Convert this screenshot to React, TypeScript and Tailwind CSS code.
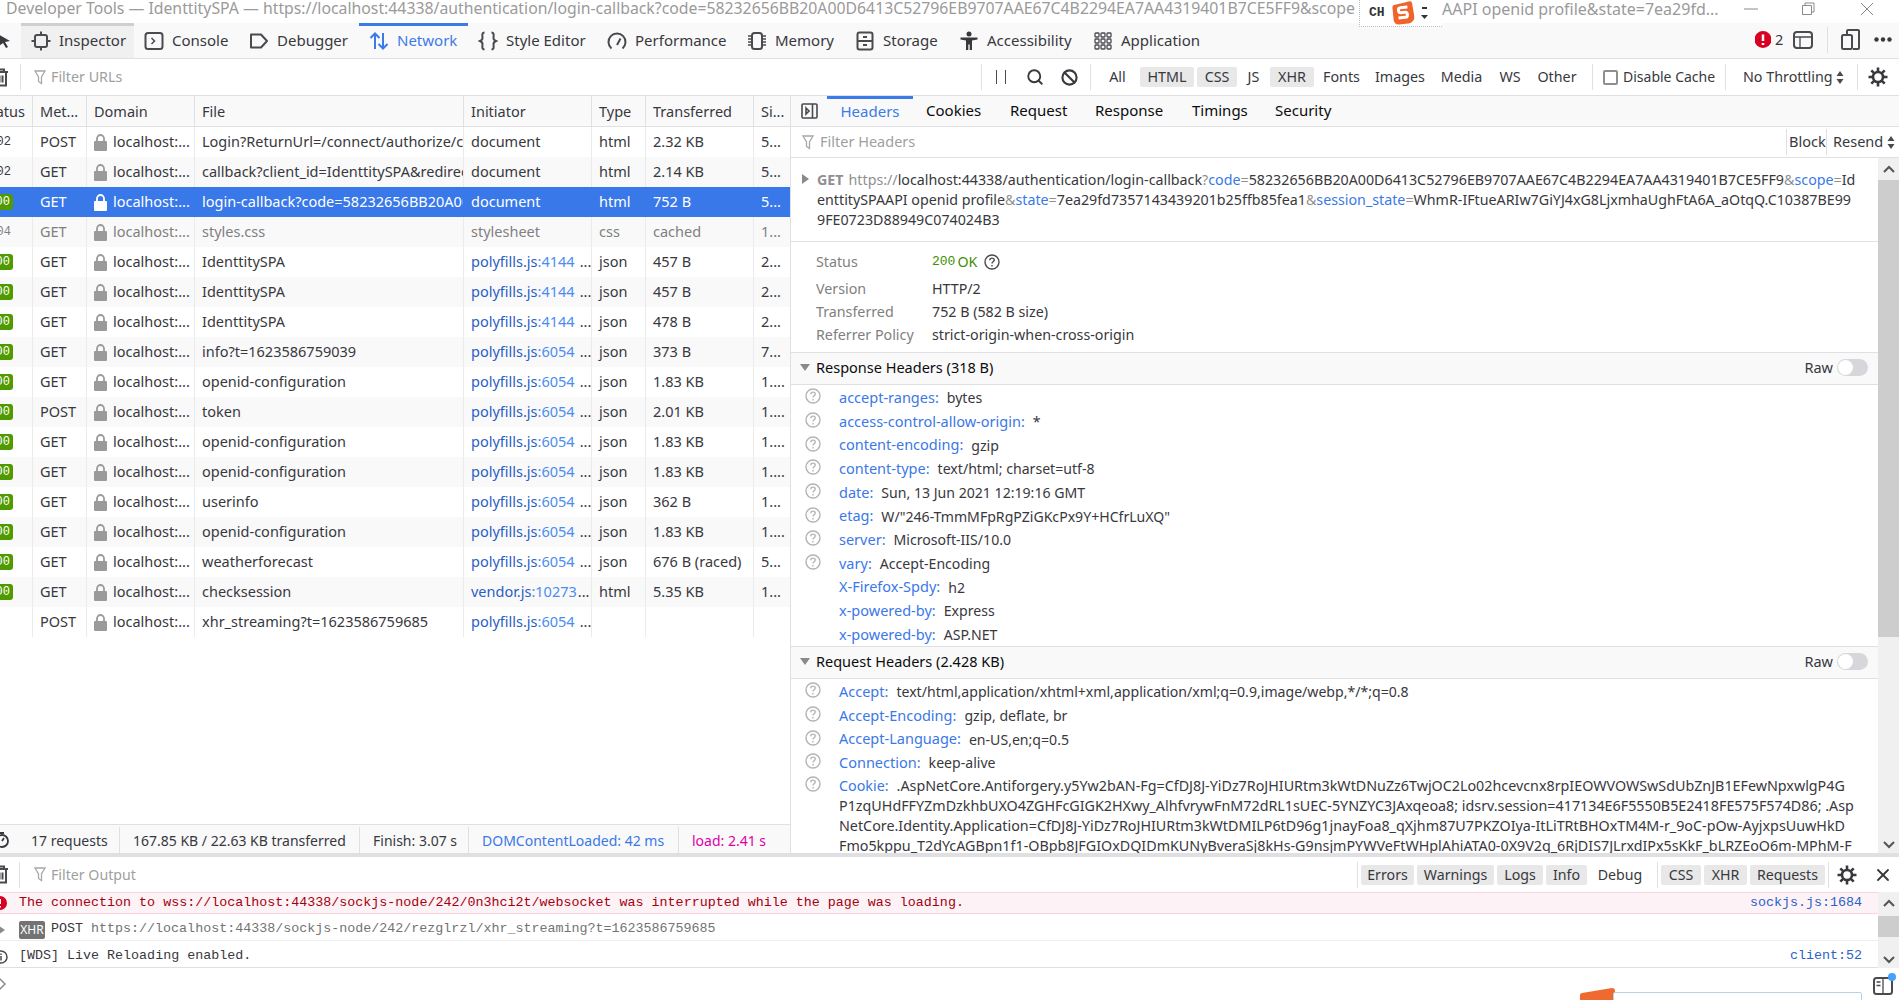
import React from "react";
import { Search, Ban, X } from "lucide-react";

const sans = "font-['Noto_Sans','Open_Sans',sans-serif]";
const mono = "font-['Liberation_Mono',monospace]";

function Sep({ className = "" }: { className?: string }) {
  return <div className={`w-px h-[26px] bg-[#e0e0e2] shrink-0 ${className}`} />;
}

function Svg({ size = 20, children, className = "" }: { size?: number; children: React.ReactNode; className?: string }) {
  return (
    <svg width={size} height={size} viewBox="0 0 20 20" fill="none" stroke="currentColor" strokeWidth="2" className={`shrink-0 ${className}`}>
      {children}
    </svg>
  );
}

function Funnel() {
  return (
    <svg width="12" height="15" viewBox="0 0 12 15" fill="none" stroke="#a8a8a8" strokeWidth="1.3" className="shrink-0">
      <path d="M1 1h10L7.5 7v6.5l-3-2V7z" />
    </svg>
  );
}

function Trash() {
  return (
    <svg width="16" height="19" viewBox="0 0 16 19" fill="none" stroke="#4a4a4f" strokeWidth="2" className="shrink-0">
      <path d="M1 4h14M5 4V1.500h6V4M3 4v13.500h10V4M6.500 7.500v7M9.500 7.500v7" />
    </svg>
  );
}

function Gear() {
  return (
    <svg width="22" height="22" viewBox="0 0 22 22" fill="none" stroke="#38383d" className="shrink-0">
      <circle cx="11" cy="11" r="5" strokeWidth="2.6" />
      <path d="M11 1.500v4M11 16.500v4M1.500 11h4M16.500 11h4M4.300 4.300l2.800 2.800M14.900 14.900l2.800 2.800M17.700 4.300l-2.800 2.800M7.100 14.900l-2.800 2.800" strokeWidth="2.6" />
    </svg>
  );
}

function Help({ dark = false }: { dark?: boolean }) {
  return (
    <svg width="16" height="16" viewBox="0 0 16 16" fill="none" stroke={dark ? "#4a4a4f" : "#b4b4b4"} strokeWidth="1.400" className="shrink-0">
      <circle cx="8" cy="8" r="7" />
      <path d="M5.800 6.200c0-1.300 1-2.100 2.200-2.100s2.200.8 2.200 2c0 1.700-2.200 1.600-2.200 3.400" />
      <path d="M8 11v1.500" />
    </svg>
  );
}

function Lock({ white = false }: { white?: boolean }) {
  return (
    <svg width="13" height="17" viewBox="0 0 13 17" className="shrink-0">
      <path d="M1 7h11a1 1 0 0 1 1 1v8a1 1 0 0 1-1 1H1a1 1 0 0 1-1-1V8a1 1 0 0 1 1-1z" fill={white ? "#fff" : "#9a9a9a"} />
      <path d="M3 8V4.500a3.500 3.500 0 0 1 7 0V8" fill="none" stroke={white ? "#fff" : "#9a9a9a"} strokeWidth="1.800" />
    </svg>
  );
}

function Triangle({ open = true }: { open?: boolean }) {
  return open ? (
    <svg width="10" height="7" viewBox="0 0 10 7" className="shrink-0"><path d="M0 0h10L5 7z" fill="#8a8a8a" /></svg>
  ) : (
    <svg width="7" height="10" viewBox="0 0 7 10" className="shrink-0"><path d="M0 0v10l7-5z" fill="#8a8a8a" /></svg>
  );
}

function UpDown() {
  return (
    <svg width="8" height="13" viewBox="0 0 8 13" fill="#4a4a4f" className="shrink-0">
      <path d="M4 0l3.500 5h-7zM4 13L.5 8h7z" />
    </svg>
  );
}

function Toggle() {
  return (
    <div className="w-[31px] h-[17px] rounded-full bg-[#d7d7db] flex items-center pl-px">
      <div className="w-[15px] h-[15px] rounded-full bg-white" />
    </div>
  );
}

const tabs: { label: string; width: string; icon: React.ReactNode; active?: boolean; selected?: boolean }[] = [
  {
    label: "Inspector",
    width: "w-[113px]",
    selected: true,
    icon: (
      <Svg>
        <rect x="4" y="4" width="12" height="12" rx="2" />
        <path d="M10 0.500v3.500M10 16v3.500M.5 10H4M16 10h3.500" />
      </Svg>
    ),
  },
  {
    label: "Console",
    width: "w-[105px]",
    icon: (
      <Svg>
        <rect x="1.500" y="2" width="17" height="16" rx="2.500" />
        <path d="M7.500 7l3 3-3 3" strokeWidth="1.500" />
      </Svg>
    ),
  },
  {
    label: "Debugger",
    width: "w-[120px]",
    icon: (
      <Svg>
        <path d="M2 3.500h10l6 6.500-6 6.500H2z" strokeLinejoin="round" />
      </Svg>
    ),
  },
  {
    label: "Network",
    width: "w-[109px]",
    active: true,
    icon: (
      <Svg>
        <path d="M6 18V2.500M1.500 7L6 2.500 10.500 7M14 2v15.500M9.500 13l4.500 4.500 4.500-4.500" />
      </Svg>
    ),
  },
  {
    label: "Style Editor",
    width: "w-[129px]",
    icon: (
      <Svg>
        <path d="M6.500 1.500C3.500 1.500 4.500 5 4.500 7c0 2-2.500 3-2.500 3s2.500 1 2.500 3c0 2-1 5.500 2 5.500M13.500 1.500c3 0 2 3.500 2 5.500 0 2 2.500 3 2.500 3s-2.500 1-2.500 3c0 2 1 5.500-2 5.500" />
      </Svg>
    ),
  },
  {
    label: "Performance",
    width: "w-[140px]",
    icon: (
      <Svg>
        <path d="M4.500 17.500a8.500 8.500 0 1 1 11 0" />
        <path d="M13.500 7.500L10 14" />
      </Svg>
    ),
  },
  {
    label: "Memory",
    width: "w-[108px]",
    icon: (
      <Svg>
        <rect x="5" y="2" width="10" height="16" rx="2.500" />
        <path d="M1 5h3M1 8h3M1 11h3M1 14h3M16 5h3M16 8h3M16 11h3M16 14h3" strokeWidth="1.300" />
      </Svg>
    ),
  },
  {
    label: "Storage",
    width: "w-[104px]",
    icon: (
      <Svg>
        <rect x="2.500" y="1.500" width="15" height="17" rx="2" />
        <path d="M2.500 10h15M8 6h4M8 14h4" />
      </Svg>
    ),
  },
  {
    label: "Accessibility",
    width: "w-[134px]",
    icon: (
      <svg width="20" height="20" viewBox="0 0 20 20" fill="#38383d" className="shrink-0">
        <circle cx="10" cy="3" r="2.500" />
        <path d="M1.500 6.500h17v2l-5.500 1V19h-2.300v-5.500H9.300V19H7V9.500l-5.500-1z" />
      </svg>
    ),
  },
  {
    label: "Application",
    width: "w-[128px]",
    icon: (
      <svg width="20" height="20" viewBox="0 0 20 20" fill="none" stroke="#4a4a4f" strokeWidth="1.300" className="shrink-0">
        {[2, 8, 14].map((y) =>
          [2, 8, 14].map((x) => <rect key={`${x}-${y}`} x={x} y={y} width="4" height="4" rx="0.800" />)
        )}
      </svg>
    ),
  },
];

const chips: { label: string; width: string; on?: boolean }[] = [
  { label: "All", width: "w-[39px]" },
  { label: "HTML", width: "w-[54px]", on: true },
  { label: "CSS", width: "w-[40px]", on: true },
  { label: "JS", width: "w-[27px]" },
  { label: "XHR", width: "w-[44px]", on: true },
  { label: "Fonts", width: "w-[49px]" },
  { label: "Images", width: "w-[62px]" },
  { label: "Media", width: "w-[55px]" },
  { label: "WS", width: "w-[36px]" },
  { label: "Other", width: "w-[52px]" },
];

type Req = {
  status: string;
  method: string;
  file: string;
  init?: [string, string];
  initText?: string;
  type: string;
  size: string;
  si: string;
};

const p4144: [string, string] = ["polyfills.js", ":4144"];
const p6054: [string, string] = ["polyfills.js", ":6054"];

const requests: Req[] = [
  { status: "302", method: "POST", file: "Login?ReturnUrl=/connect/authorize/ca", initText: "document", type: "html", size: "2.32 KB", si: "5..." },
  { status: "302", method: "GET", file: "callback?client_id=IdenttitySPA&redirec", initText: "document", type: "html", size: "2.14 KB", si: "5..." },
  { status: "200", method: "GET", file: "login-callback?code=58232656BB20A00", initText: "document", type: "html", size: "752 B", si: "5..." },
  { status: "304", method: "GET", file: "styles.css", initText: "stylesheet", type: "css", size: "cached", si: "1..." },
  { status: "200", method: "GET", file: "IdenttitySPA", init: p4144, type: "json", size: "457 B", si: "2..." },
  { status: "200", method: "GET", file: "IdenttitySPA", init: p4144, type: "json", size: "457 B", si: "2..." },
  { status: "200", method: "GET", file: "IdenttitySPA", init: p4144, type: "json", size: "478 B", si: "2..." },
  { status: "200", method: "GET", file: "info?t=1623586759039", init: p6054, type: "json", size: "373 B", si: "7..." },
  { status: "200", method: "GET", file: "openid-configuration", init: p6054, type: "json", size: "1.83 KB", si: "1...." },
  { status: "200", method: "POST", file: "token", init: p6054, type: "json", size: "2.01 KB", si: "1...." },
  { status: "200", method: "GET", file: "openid-configuration", init: p6054, type: "json", size: "1.83 KB", si: "1...." },
  { status: "200", method: "GET", file: "openid-configuration", init: p6054, type: "json", size: "1.83 KB", si: "1...." },
  { status: "200", method: "GET", file: "userinfo", init: p6054, type: "json", size: "362 B", si: "1..." },
  { status: "200", method: "GET", file: "openid-configuration", init: p6054, type: "json", size: "1.83 KB", si: "1...." },
  { status: "200", method: "GET", file: "weatherforecast", init: p6054, type: "json", size: "676 B (raced)", si: "5..." },
  { status: "200", method: "GET", file: "checksession", init: ["vendor.js", ":10273"], type: "html", size: "5.35 KB", si: "1..." },
  { status: "", method: "POST", file: "xhr_streaming?t=1623586759685", init: p6054, type: "", size: "", si: "" },
];

const cell = "h-full flex items-center shrink-0 overflow-hidden whitespace-nowrap border-r";

function RequestRow({ r, index }: { r: Req; index: number }) {
  const selected = index === 2;
  const dim = r.status === "304";
  const bg = selected ? "bg-[#3878e8] text-white" : index % 2 === 1 ? "bg-[#f9f9fa]" : "bg-white";
  const fg = selected ? "" : dim ? "text-[#808080]" : "text-[#38383d]";
  const line = selected ? "border-transparent" : "border-[#ebebec]";
  return (
    <div className={`h-[30px] flex ${bg} ${fg}`}>
      <div className={`${cell} ${line} w-[33px] justify-end pr-[19px]`}>
        {r.status === "200" ? (
          <span className={`${mono} shrink-0 h-[16px] leading-[16px] px-[3px] rounded-[3px] bg-[#4f9a00] text-white text-[12px]`}>200</span>
        ) : (
          <span className={`${mono} shrink-0 pr-[2px] text-[12px]`}>{r.status}</span>
        )}
      </div>
      <div className={`${cell} ${line} w-[54px] pl-[7px]`}>{r.method}</div>
      <div className={`${cell} ${line} w-[108px] pl-[7px] gap-[6px]`}>
        <Lock white={selected} />
        <span>localhost:...</span>
      </div>
      <div className={`${cell} ${line} w-[269px] pl-[7px]`}>{r.file}</div>
      <div className={`${cell} ${line} w-[128px] pl-[7px]`}>
        {r.init ? (
          <>
            <span className="text-[#2a5ec4]">{r.init[0]}</span>
            <span className="text-[#4a8df0]">{r.init[1]}</span>
            <span className={r.init[0] === "vendor.js" ? "ml-[1px]" : "ml-[5px]"}>...</span>
          </>
        ) : (
          r.initText
        )}
      </div>
      <div className={`${cell} ${line} w-[54px] pl-[7px]`}>{r.type}</div>
      <div className={`${cell} ${line} w-[108px] pl-[7px]`}>{r.size}</div>
      <div className="h-full flex items-center flex-1 pl-[7px] whitespace-nowrap">{r.si}</div>
    </div>
  );
}

const responseHeaders = [
  ["accept-ranges", "bytes"],
  ["access-control-allow-origin", "*"],
  ["content-encoding", "gzip"],
  ["content-type", "text/html; charset=utf-8"],
  ["date", "Sun, 13 Jun 2021 12:19:16 GMT"],
  ["etag", 'W/"246-TmmMFpRgPZiGKcPx9Y+HCfrLuXQ"'],
  ["server", "Microsoft-IIS/10.0"],
  ["vary", "Accept-Encoding"],
  ["X-Firefox-Spdy", "h2"],
  ["x-powered-by", "Express"],
  ["x-powered-by", "ASP.NET"],
];

const requestHeaders = [
  ["Accept", "text/html,application/xhtml+xml,application/xml;q=0.9,image/webp,*/*;q=0.8"],
  ["Accept-Encoding", "gzip, deflate, br"],
  ["Accept-Language", "en-US,en;q=0.5"],
  ["Connection", "keep-alive"],
];

function HeaderRow({ name, value, help = true }: { name: string; value: string; help?: boolean }) {
  return (
    <div className="h-[23.7px] flex items-center whitespace-nowrap">
      <div className="w-[16px] ml-[14px] mr-[18px] -mt-[3px]">{help && <Help />}</div>
      <span className="text-[#3b78e7]">{name}:</span>
      <span className="ml-[8px] text-[#38383d] text-[14.100px]">{value}</span>
    </div>
  );
}

function SectionBar({ title }: { title: string }) {
  return (
    <div className="h-[32px] shrink-0 flex items-center bg-[#f9f9fa] border-b border-[#e0e0e2] pl-[9px] pr-[10px] pb-[2px] text-[#0c0c0d]">
      <Triangle />
      <span className="ml-[6px]">{title}</span>
      <span className="ml-auto mr-[4px] text-[#38383d]">Raw</span>
      <Toggle />
    </div>
  );
}

function ScrollBar({ top, thumb }: { top: string; thumb: string }) {
  return (
    <div className="w-[21px] shrink-0 bg-[#f0f0f0] flex flex-col items-center text-[#555]">
      <svg width="12" height="8" viewBox="0 0 12 8" fill="none" stroke="currentColor" strokeWidth="2" className={`shrink-0 ${top}`}>
        <path d="M1 7l5-5 5 5" />
      </svg>
      <div className={`w-full bg-[#cdcdcd] ${thumb}`} />
      <svg width="12" height="8" viewBox="0 0 12 8" fill="none" stroke="currentColor" strokeWidth="2" className="shrink-0 mt-auto mb-[4px]">
        <path d="M1 1l5 5 5-5" />
      </svg>
    </div>
  );
}

const G = ({ children }: { children: React.ReactNode }) => <span className="text-[#8f8f8f]">{children}</span>;
const B = ({ children }: { children: React.ReactNode }) => <span className="text-[#3b78e7]">{children}</span>;

export default function App() {
  return (
    <div className={`${sans} w-[1899px] h-[1000px] overflow-hidden bg-white text-[14.500px] text-[#38383d] flex flex-col`}>
      {/* window title */}
      <div className="h-[23px] shrink-0 flex items-center pl-[6px] pb-[5px] text-[#9a9a9a] text-[16px] whitespace-nowrap relative">
        <span className="w-[1353px] overflow-hidden text-[15.800px]">
          Developer Tools — IdenttitySPA — https://localhost:44338/authentication/login-callback?code=58232656BB20A00D6413C52796EB9707AAE67C4B2294EA7AA4319401B7CE5FF9&amp;scope
        </span>
        <div className="absolute left-[1359px] top-0 w-[83px] h-[27px] bg-white border-l border-b border-dotted border-[#bbb] z-10 flex items-center pl-[9px] gap-[7px]">
          <span className={`${mono} text-[13px] font-bold text-[#333]`}>CH</span>
          <svg width="22" height="24" viewBox="0 0 22 24" className="-rotate-6">
            <path d="M4 3l15-2a2 2 0 0 1 2 2l1 14c0 3-3 6-7 6H6c-3 0-5-2-5-5V6c0-2 1-3 3-3z" fill="#f0642a" />
            <path d="M16 6.500H9c-3 0-3 5 0 5h4c3 0 3 5 0 5H6" fill="none" stroke="#fff" strokeWidth="3" />
          </svg>
          <svg width="7" height="14" viewBox="0 0 7 14" fill="#333"><path d="M1 1h5v2H1zM0 9h7l-3.500 4z" /></svg>
        </div>
        <span className="ml-[83px]">AAPI openid profile&amp;state=7ea29fd...</span>
        <svg width="14" height="14" viewBox="0 0 14 14" fill="none" stroke="#8a8a8a" className="absolute left-[1744px] top-[2px]"><path d="M0 7h14" /></svg>
        <svg width="14" height="14" viewBox="0 0 14 14" fill="none" stroke="#8a8a8a" className="absolute left-[1801px] top-[2px]"><path d="M1.500 3.500h9v9h-9zM4 3.500V1h9v9h-2.500" /></svg>
        <svg width="14" height="14" viewBox="0 0 14 14" fill="none" stroke="#8a8a8a" className="absolute left-[1860px] top-[2px]"><path d="M1 1l12 12M13 1L1 13" /></svg>
      </div>

      {/* tool tabs */}
      <div className="h-[36px] shrink-0 flex items-stretch bg-[#f9f9fa] border-b border-[#e0e0e2] text-[15px]">
        <div className="w-[21px] overflow-hidden flex items-center justify-end pr-[10px]">
          <svg width="14" height="16" viewBox="0 0 14 16" fill="#38383d" className="shrink-0"><path d="M1 1l12 7-5 1 3 5-2 1-3-5-4 3z" /></svg>
        </div>
        {tabs.map((t) => (
          <div
            key={t.label}
            className={`${t.width} shrink-0 flex items-center gap-[8px] pl-[10px] pb-[3px] whitespace-nowrap border-t-[3px] ${
              t.active ? "border-[#3b7be9] text-[#3b7be9]" : t.selected ? "border-[#cfcfcf] bg-[#f0f0f1] text-[#38383d]" : "border-transparent text-[#38383d]"
            }`}
          >
            <span className={t.active ? "text-[#3b7be9]" : "text-[#4a4a4f]"}>{t.icon}</span>
            {t.label}
          </div>
        ))}
        <div className="ml-auto flex items-center pr-[7px] pb-[2px] text-[#38383d] text-[14.500px]">
          <svg width="16" height="17" viewBox="0 0 16 17" className="mr-[4px]">
            <path d="M8 0a8 8 0 1 1 0 17A8 8 0 0 1 8 0z" fill="#d70022" />
            <path d="M8 3.500v6.500M8 12v2" stroke="#fff" strokeWidth="2.500" />
          </svg>
          <span className="w-[14px] mr-[4px]">2</span>
          <svg width="20" height="20" viewBox="0 0 20 20" fill="none" stroke="#4a4a4f" strokeWidth="2" className="mr-[14px]">
            <rect x="1" y="2" width="18" height="16" rx="3" />
            <path d="M1 7h18M7 7v11" strokeWidth="1.300" />
          </svg>
          <Sep className="mr-[13px]" />
          <svg width="19" height="21" viewBox="0 0 19 21" fill="none" stroke="#4a4a4f" strokeWidth="2" className="mr-[14px]">
            <path d="M6 5V2a1 1 0 0 1 1-1h10a1 1 0 0 1 1 1v17a1 1 0 0 1-1 1h-5" />
            <rect x="1" y="6" width="10" height="14" rx="1.500" />
          </svg>
          <svg width="18" height="5" viewBox="0 0 18 5" fill="#38383d"><circle cx="2.500" cy="2.500" r="2.200" /><circle cx="9" cy="2.500" r="2.200" /><circle cx="15.500" cy="2.500" r="2.200" /></svg>
        </div>
      </div>

      {/* network filter bar */}
      <div className="h-[37px] shrink-0 flex items-center border-b border-[#e0e0e2] text-[14.300px]">
        <div className="w-[20px] shrink-0 overflow-hidden flex justify-end pr-[11px]"><Trash /></div>
        <Sep />
        <div className="ml-[13px] flex items-center gap-[5px] text-[#a0a0a0]">
          <Funnel />
          Filter URLs
        </div>
        <Sep className="ml-auto" />
        <div className="ml-[14px] flex gap-[8px] w-[10px] h-[14px] shrink-0">
          <div className="w-px h-full bg-[#4a4a4f]" />
          <div className="w-px h-full bg-[#4a4a4f]" />
        </div>
        <Search size={18} strokeWidth={2.500} className="ml-[20px] text-[#38383d] shrink-0" />
        <Ban size={17} strokeWidth={3} className="ml-[17px] text-[#38383d] shrink-0" />
        <Sep className="ml-[12px]" />
        <div className="ml-[7px] flex gap-[3px]">
          {chips.map((c) => (
            <div key={c.label} className={`${c.width} h-[20px] shrink-0 rounded-[2px] flex items-center justify-center ${c.on ? "bg-[#e8e8e9]" : ""}`}>
              {c.label}
            </div>
          ))}
        </div>
        <Sep className="ml-[9px]" />
        <div className="ml-[10px] w-[15px] h-[15px] border-2 border-[#8f8f8f] rounded-[2px] shrink-0" />
        <span className="ml-[5px] w-[102px] whitespace-nowrap text-[14px] pb-[2px]">Disable Cache</span>
        <Sep />
        <span className="ml-[17px] w-[90px] whitespace-nowrap">No Throttling</span>
        <span className="ml-[3px]"><UpDown /></span>
        <Sep className="ml-[13px]" />
        <span className="ml-[9px] mr-[10px]"><Gear /></span>
      </div>

      {/* requests + details */}
      <div className="h-[757px] shrink-0 flex">
        <div className="w-[790px] shrink-0 flex flex-col">
          <div className="h-[31px] shrink-0 flex bg-[#f9f9fa] border-b border-[#e0e0e2] [&>div]:pt-[2px]">
            <div className={`${cell} border-[#e0e0e2] w-[33px] justify-end pr-[7px]`}>Status</div>
            <div className={`${cell} border-[#e0e0e2] w-[54px] pl-[7px]`}>Met...</div>
            <div className={`${cell} border-[#e0e0e2] w-[108px] pl-[7px]`}>Domain</div>
            <div className={`${cell} border-[#e0e0e2] w-[269px] pl-[7px]`}>File</div>
            <div className={`${cell} border-[#e0e0e2] w-[128px] pl-[7px]`}>Initiator</div>
            <div className={`${cell} border-[#e0e0e2] w-[54px] pl-[7px]`}>Type</div>
            <div className={`${cell} border-[#e0e0e2] w-[108px] pl-[7px]`}>Transferred</div>
            <div className="h-full flex items-center pl-[7px]">Si...</div>
          </div>
          <div className="flex-1">
            {requests.map((r, i) => (
              <RequestRow key={i} r={r} index={i} />
            ))}
          </div>
          <div className="h-[29px] shrink-0 flex items-center bg-[#f9f9fa] border-t border-[#e0e0e2] whitespace-nowrap text-[14px] pt-[2px]">
            <svg width="14" height="16" viewBox="0 0 14 16" fill="none" stroke="#38383d" strokeWidth="1.800" className="-ml-[5px] shrink-0">
              <circle cx="7" cy="9" r="6" />
              <path d="M7 9l2-3M5 1h4" />
            </svg>
            <span className="ml-[22px] w-[88px]">17 requests</span>
            <Sep className="h-[20px]" />
            <span className="ml-[13px] w-[226px]">167.85 KB / 22.63 KB transferred</span>
            <Sep className="h-[20px]" />
            <span className="ml-[13px] w-[95px]">Finish: 3.07 s</span>
            <Sep className="h-[20px]" />
            <span className="ml-[13px] w-[196px] text-[#3b78e7]">DOMContentLoaded: 42 ms</span>
            <Sep className="h-[20px]" />
            <span className="ml-[13px] text-[#dd00a9]">load: 2.41 s</span>
          </div>
        </div>

        <div className="w-[1109px] shrink-0 border-l border-[#e0e0e2] flex flex-col">
          <div className="h-[31px] shrink-0 flex items-stretch bg-[#f9f9fa] border-b border-[#e0e0e2] text-[15px]">
            <div className="w-[36px] flex items-center pl-[10px]">
              <svg width="17" height="16" viewBox="0 0 17 16" fill="none" stroke="#4a4a4f" strokeWidth="1.600">
                <rect x="1" y="1" width="15" height="14" rx="1" />
                <path d="M11.500 1v14M5 5l3 3-3 3z" />
              </svg>
            </div>
            <div className="w-[86px] flex justify-center items-center border-t-[3px] border-[#3b7be9] text-[#3b7be9] pb-[3px]">Headers</div>
            <div className="ml-[13px] w-[57px] flex items-center pb-[1px] text-[#0c0c0d]">Cookies</div>
            <div className="ml-[27px] w-[58px] flex items-center pb-[1px] text-[#0c0c0d]">Request</div>
            <div className="ml-[27px] w-[69px] flex items-center pb-[1px] text-[#0c0c0d]">Response</div>
            <div className="ml-[28px] w-[55px] flex items-center pb-[1px] text-[#0c0c0d]">Timings</div>
            <div className="ml-[28px] w-[57px] flex items-center pb-[1px] text-[#0c0c0d]">Security</div>
          </div>
          <div className="h-[31px] shrink-0 flex items-center border-b border-[#e0e0e2] pl-[11px]">
            <Funnel />
            <span className="ml-[6px] text-[#a0a0a0]">Filter Headers</span>
            <Sep className="ml-auto h-[24px]" />
            <span className="ml-[2px] w-[37px]">Block</span>
            <Sep className="h-[24px]" />
            <span className="ml-[6px] w-[50px]">Resend</span>
            <span className="mx-[4px]"><UpDown /></span>
          </div>
          <div className="flex-1 min-h-0 flex">
            <div className="w-[1087px] shrink-0 flex flex-col overflow-hidden">
              <div className="h-[84px] shrink-0 border-b border-[#e0e0e2] pt-[12px] pl-[26px] leading-[20px] whitespace-nowrap relative text-[14.250px]">
                <span className="absolute left-[11px] top-[16px]"><Triangle open={false} /></span>
                <div>
                  <span className="font-bold text-[#8f8f8f] mr-[5px]">GET</span>
                  <G>https://</G>localhost:44338/authentication/login-callback<G>?</G><B>code</B><G>=</G>58232656BB20A00D6413C52796EB9707AAE67C4B2294EA7AA4319401B7CE5FF9<G>&amp;</G><B>scope</B><G>=</G>Id
                </div>
                <div>
                  enttitySPAAPI openid profile<G>&amp;</G><B>state</B><G>=</G>7ea29fd7357143439201b25ffb85fea1<G>&amp;</G><B>session_state</B><G>=</G>WhmR-IFtueARIw7GiYJ4xG8LjxmhaUghFtA6A_aOtqQ.C10387BE99
                </div>
                <div>9FE0723D88949C074024B3</div>
              </div>
              <div className="h-[111px] shrink-0 border-b border-[#e0e0e2] pt-[8px] pl-[25px] text-[14.250px]">
                <div className="h-[23px] mb-[4px] flex items-center">
                  <span className="w-[116px] text-[#808080]">Status</span>
                  <span className={`${mono} text-[13px] text-[#3f8f00]`}>200</span>
                  <span className="ml-[2px] text-[#3f8f00]">OK</span>
                  <span className="ml-[7px]"><Help dark /></span>
                </div>
                <div className="h-[23px] flex items-center"><span className="w-[116px] text-[#808080]">Version</span>HTTP/2</div>
                <div className="h-[23px] flex items-center"><span className="w-[116px] text-[#808080]">Transferred</span>752 B (582 B size)</div>
                <div className="h-[23px] flex items-center"><span className="w-[116px] text-[#808080]">Referrer Policy</span>strict-origin-when-cross-origin</div>
              </div>
              <SectionBar title="Response Headers (318 B)" />
              <div className="h-[261px] shrink-0 overflow-hidden pt-[1px]">
                {responseHeaders.map(([n, v], i) => (
                  <HeaderRow key={i} name={n} value={v} help={i < 8} />
                ))}
              </div>
              <div className="border-t border-[#e0e0e2] shrink-0" />
              <SectionBar title="Request Headers (2.428 KB)" />
              <div className="flex-1 min-h-0 overflow-hidden pt-[1px]">
                {requestHeaders.map(([n, v], i) => (
                  <HeaderRow key={i} name={n} value={v} />
                ))}
                <div className="flex whitespace-nowrap leading-[20px] pt-[1px] text-[14.300px]">
                  <div className="w-[16px] ml-[14px] mr-[18px]"><Help /></div>
                  <div>
                    <div>
                      <span className="text-[#3b78e7]">Cookie:</span>
                      <span className="ml-[8px]">.AspNetCore.Antiforgery.y5Yw2bAN-Fg=CfDJ8J-YiDz7RoJHIURtm3kWtDNuZz6TwjOC2Lo02hcevcnx8rpIEOWVOWSwSdUbZnJB1EFewNpxwlgP4G</span>
                    </div>
                    <div>P1zqUHdFFYZmDzkhbUXO4ZGHFcGIGK2HXwy_AlhfvrywFnM72dRL1sUEC-5YNZYC3JAxqeoa8; idsrv.session=417134E6F5550B5E2418FE575F574D86; .Asp</div>
                    <div>NetCore.Identity.Application=CfDJ8J-YiDz7RoJHIURtm3kWtDMILP6tD96g1jnayFoa8_qXjhm87U7PKZOIya-ItLiTRtBHOxTM4M-r_9oC-pOw-AyjxpsUuwHkD</div>
                    <div>Fmo5kppu_T2dYcAGBpn1f1-OBpb8JFGIOxDQIDmKUNyBveraSj8kHs-G9nsjmPYWVeFtWHplAhiATA0-0X9V2q_6RjDIS7JLrxdIPx5sKkF_bLRZEoO6m-MPhM-F</div>
                  </div>
                </div>
              </div>
            </div>
            <ScrollBar top="mt-[7px] mb-[7px]" thumb="h-[457px]" />
          </div>
        </div>
      </div>

      {/* console */}
      <div className="h-[4px] shrink-0 bg-[#e0e0e2]" />
      <div className="h-[35px] shrink-0 flex items-center text-[14.200px]">
        <div className="w-[19px] shrink-0 overflow-hidden flex justify-end pr-[10px]"><Trash /></div>
        <Sep />
        <div className="ml-[14px] flex items-center gap-[5px] text-[#a0a0a0]">
          <Funnel />
          Filter Output
        </div>
        <div className="ml-auto flex items-center">
          <Sep />
          {[
            { label: "Errors", w: "w-[53px]", on: true },
            { label: "Warnings", w: "w-[77px]", on: true },
            { label: "Logs", w: "w-[46px]", on: true },
            { label: "Info", w: "w-[41px]", on: true },
            { label: "Debug", w: "w-[60px]", on: false },
          ].map((f) => (
            <div key={f.label} className={`${f.w} h-[20px] ml-[3px] first:ml-[7px] rounded-[2px] flex items-center justify-center ${f.on ? "bg-[#e8e8e9]" : ""}`}>
              {f.label}
            </div>
          ))}
          <Sep className="ml-[7px]" />
          {[
            { label: "CSS", w: "w-[40px]" },
            { label: "XHR", w: "w-[43px]" },
            { label: "Requests", w: "w-[75px]" },
          ].map((f) => (
            <div key={f.label} className={`${f.w} h-[20px] ml-[3px] rounded-[2px] flex items-center justify-center bg-[#e8e8e9]`}>
              {f.label}
            </div>
          ))}
          <Sep className="ml-[3px]" />
          <span className="ml-[7px]"><Gear /></span>
          <X size={20} strokeWidth={2.200} className="ml-[15px] mr-[6px] text-[#38383d]" />
        </div>
      </div>
      <div className="h-[76px] shrink-0 flex">
        <div className={`${mono} w-[1878px] shrink-0 text-[13.350px] whitespace-nowrap overflow-hidden`}>
          <div className="h-[22px] flex items-center bg-[#fdf2f5] border-y border-[#f8d5dd] text-[#a4000f]">
            <svg width="14" height="14" viewBox="0 0 14 14" className="-ml-[7px] mr-[12px] shrink-0">
              <circle cx="7" cy="7" r="7" fill="#d70022" />
              <path d="M7 3v5M7 10v1.500" stroke="#fff" strokeWidth="2" />
            </svg>
            The connection to wss://localhost:44338/sockjs-node/242/0n3hci2t/websocket was interrupted while the page was loading.
            <span className="ml-auto mr-[16px] text-[#2a62c9]">sockjs.js:1684</span>
          </div>
          <div className="h-[27px] flex items-center border-b border-[#ededf0] pt-[5px]">
            <span className="-ml-[2px]"><Triangle open={false} /></span>
            <span className={`${sans} ml-[14px] w-[26px] h-[18px] rounded-[2px] bg-[#737373] text-white text-[12px] flex items-center justify-center`}>XHR</span>
            <span className="ml-[6px]">POST</span>
            <span className="ml-[8px] text-[#737373]">https://localhost:44338/sockjs-node/242/rezglrzl/xhr_streaming?t=1623586759685</span>
          </div>
          <div className="h-[27px] flex items-center border-b border-[#e0e0e2] pt-[5px]">
            <svg width="14" height="14" viewBox="0 0 14 14" fill="none" stroke="#4a4a4f" strokeWidth="1.500" className="-ml-[6px] mr-[11px] shrink-0">
              <circle cx="7" cy="7" r="6" />
              <path d="M7 6v4.500M7 3.500v1.500" />
            </svg>
            [WDS] Live Reloading enabled.
            <span className="ml-auto mr-[16px] text-[#2a62c9]">client:52</span>
          </div>
        </div>
        <ScrollBar top="mt-[7px] mb-[9px]" thumb="h-[21px]" />
      </div>
      <div className="flex-1 flex items-center relative overflow-hidden">
        <svg width="9" height="14" viewBox="0 0 9 14" fill="none" stroke="#8a8a8a" strokeWidth="1.500" className="-ml-[2px]"><path d="M1 1l6 6-6 6" /></svg>
        <svg width="36" height="16" viewBox="0 0 36 16" className="absolute left-[1580px] top-[19px]">
          <path d="M2 6l30-5c2 0 3 1 3 3v12H0V8c0-1 1-2 2-2z" fill="#ee6a2e" />
        </svg>
        <div className="absolute left-[1613px] top-[24px] w-[249px] h-[20px] bg-white border border-[#bcd0ea] rounded-[2px]" />
        <svg width="20" height="20" viewBox="0 0 20 20" fill="none" stroke="#4a4a4f" strokeWidth="2" className="absolute left-[1873px] top-[8px]">
          <rect x="1" y="2" width="18" height="16" rx="2.500" />
          <path d="M10 2v16M3.500 6h4M3.500 9.500h4" strokeWidth="1.300" />
        </svg>
        <div className="absolute left-[1888px] top-[5px] w-[8px] h-[8px] rounded-full bg-[#45a1ff]" />
      </div>
    </div>
  );
}
